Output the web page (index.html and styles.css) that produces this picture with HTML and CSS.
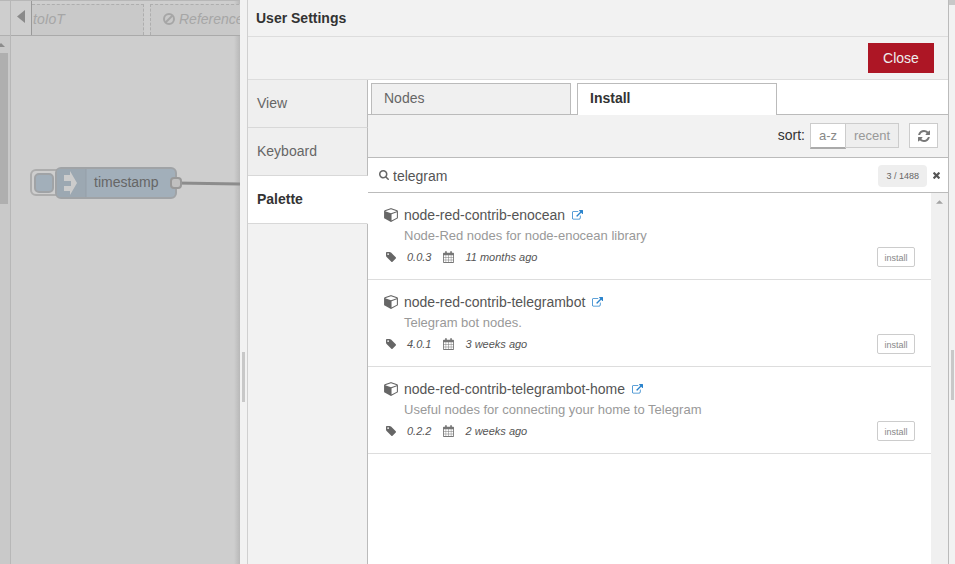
FILE: index.html
```html
<!DOCTYPE html>
<html lang="en">
<head>
<meta charset="utf-8">
<title>User Settings</title>
<link rel="stylesheet" href="styles.css">
</head>
<body>
<svg class="sprite" aria-hidden="true">
  <symbol id="refresh" viewBox="0 0 1536 1536"><path d="M1511 928q0 5-1 7-64 268-268 434.500t-478 166.500q-146 0-282.500-55t-243.500-157l-129 129q-19 19-45 19t-45-19-19-45v-448q0-26 19-45t45-19h448q26 0 45 19t19 45-19 45l-137 137q71 66 161 102t187 36q134 0 250-65t186-179q11-17 53-117 8-23 30-23h192q13 0 22.500 9.500t9.500 22.500zm25-800v448q0 26-19 45t-45 19h-448q-26 0-45-19t-19-45 19-45l138-138q-148-137-349-137-134 0-250 65t-186 179q-11 17-53 117-8 23-30 23h-199q-13 0-22.500-9.500t-9.500-22.500v-7q65-268 270-434.500t480-166.500q146 0 284 55.500t245 156.500l130-129q19-19 45-19t45 19 19 45z"/></symbol>
  <symbol id="search" viewBox="0 0 1664 1664"><path d="M1152 704q0-185-131.500-316.500t-316.500-131.500-316.500 131.500-131.500 316.500 131.500 316.500 316.500 131.500 316.500-131.500 131.500-316.500zm512 832q0 52-38 90t-90 38q-54 0-90-38l-343-342q-179 124-399 124-143 0-273.500-55.500t-225-150-150-225-55.500-273.500 55.500-273.500 150-225 225-150 273.500-55.500 273.500 55.500 225 150 150 225 55.500 273.500q0 220-124 399l343 343q37 37 37 90z"/></symbol>
  <symbol id="external" viewBox="0 0 1792 1600"><path d="M1408 928v320q0 119-84.500 203.500t-203.500 84.500h-832q-119 0-203.500-84.500t-84.500-203.500v-832q0-119 84.500-203.500t203.500-84.500h704q14 0 23 9t9 23v64q0 14-9 23t-23 9h-704q-66 0-113 47t-47 113v832q0 66 47 113t113 47h832q66 0 113-47t47-113v-320q0-14 9-23t23-9h64q14 0 23 9t9 23zm384-864v512q0 26-19 45t-45 19-45-19l-176-176-652 652q-10 10-23 10t-23-10l-114-114q-10-10-10-23t10-23l652-652-176-176q-19-19-19-45t19-45 45-19h512q26 0 45 19t19 45z"/></symbol>
  <symbol id="tag" viewBox="0 128 1515 1515"><path d="M448 448q0-53-37.500-90.500t-90.500-37.500-90.500 37.500-37.500 90.500 37.500 90.500 90.500 37.500 90.500-37.500 37.500-90.500zm1067 576q0 53-37 90l-491 492q-39 37-91 37-53 0-90-37l-715-716q-38-37-64.500-101t-26.500-117v-416q0-52 38-90t90-38h416q53 0 117 26.500t102 64.500l715 714q37 39 37 91z"/></symbol>
  <symbol id="cube" viewBox="0 120 1664 1680"><path d="M896 1629l640-349v-636l-640 233v752zm-64-865l698-254-698-254-698 254zm832-252v768q0 35-18 65t-49 47l-704 384q-28 16-61 16t-61-16l-704-384q-31-17-49-47t-18-65v-768q0-40 23-73t61-47l704-256q22-8 44-8t44 8l704 256q38 14 61 47t23 73z"/></symbol>
  <symbol id="times" viewBox="110 366 1188 1188"><path d="M1298 1322q0 40-28 68l-136 136q-28 28-68 28t-68-28l-294-294-294 294q-28 28-68 28t-68-28l-136-136q-28-28-28-68t28-68l294-294-294-294q-28-28-28-68t28-68l136-136q28-28 68-28t68 28l294 294 294-294q28-28 68-28t68 28l136 136q28 28 28 68t-28 68l-294 294 294 294q28 28 28 68z"/></symbol>
  <symbol id="calendar" viewBox="0 0 13 14"><path fill-rule="evenodd" d="M1 2h1.500V1Q2.500 0 3.500 0T4.500 1V2h4V1q0-1 1-1t1 1V2H12q1 0 1 1v10q0 1-1 1H1q-1 0-1-1V3Q0 2 1 2zM1 5v2.200h2.200V5zM3.700 5v2.200h2.500V5zM6.800 5v2.200h2.500V5zM9.800 5v2.200H12V5zM1 7.800v2.400h2.200V7.800zM3.700 7.800v2.400h2.500V7.800zM6.800 7.800v2.400h2.500V7.800zM9.800 7.800v2.400H12V7.800zM1 10.800V13h2.200v-2.200zM3.700 10.800V13h2.500v-2.200zM6.800 10.800V13h2.500v-2.200zM9.800 10.800V13H12v-2.200z"/></symbol>
  <symbol id="ban" viewBox="0 0 12 12"><circle cx="6" cy="6" r="5" fill="none" stroke="currentColor" stroke-width="2"/><path d="M2.500 9.500l7-7" stroke="currentColor" stroke-width="2"/></symbol>
  <symbol id="up" viewBox="0 0 8 4"><path d="M0 4L4 0l4 4z"/></symbol>
</svg>

<div class="app">
  <div class="editor">
    <aside class="strip">
      <div class="strip-head"></div>
      <div class="strip-scroll">
        <svg class="icon strip-arrow"><use href="#up"/></svg>
        <div class="strip-thumb"></div>
      </div>
    </aside>
    <div class="workspace">
      <div class="flow-tabs">
        <button class="scroll-left" aria-label="Scroll left"><svg class="icon" viewBox="0 0 8 13"><path d="M8 0v13L0 6.500z"/></svg></button>
        <div class="flow-tab flow-first">toIoT</div>
        <div class="flow-tab flow-second"><svg class="icon ban"><use href="#ban"/></svg>Reference</div>
      </div>
      <svg class="canvas">
        <path class="wire" d="M165 147L229 148"/>
        <rect class="inject" x="20" y="134" width="34" height="25" rx="5"/>
        <rect class="node" x="24" y="138" width="18" height="18" rx="4"/>
        <rect class="node" x="45" y="132" width="120" height="30" rx="5"/>
        <path class="node-shade" d="M75 133v28H50q-4 0-4-4V137q0-4 4-4z"/>
        <path class="node-line" d="M75 133v28"/>
        <path class="node-arrow" d="M53 139h6v-4l7 12-7 12v-4h-6v-5h7v-5h-7z"/>
        <rect class="port" x="160" y="142" width="10" height="10" rx="3"/>
        <text class="node-label" x="83" y="151">timestamp</text>
      </svg>
    </div>
  </div>

  <div class="separator"><div class="grip"></div></div>

  <section class="tray">
    <h1 class="tray-title">User Settings</h1>
    <div class="tray-toolbar"><button class="close">Close</button></div>
    <div class="tray-body">
      <nav class="side-tabs">
        <a class="side-tab" href="#view">View</a>
        <a class="side-tab" href="#keyboard">Keyboard</a>
        <a class="side-tab active" href="#palette">Palette</a>
        <div class="side-rest"></div>
      </nav>
      <div class="palette">
        <div class="tabs">
          <a class="tab" href="#nodes">Nodes</a>
          <a class="tab active" href="#install">Install</a>
        </div>
        <div class="sort-bar">
          <span class="sort-label">sort:</span>
          <div class="sort-group">
            <button class="sort selected">a-z</button><button class="sort">recent</button>
          </div>
          <button class="refresh" aria-label="Refresh"><svg class="icon"><use href="#refresh"/></svg></button>
        </div>
        <div class="search">
          <svg class="icon search-icon"><use href="#search"/></svg>
          <input class="search-input" type="text" value="telegram" aria-label="Search modules">
          <span class="count">3 / 1488</span>
          <button class="clear" aria-label="Clear"><svg class="icon"><use href="#times"/></svg></button>
        </div>
        <div class="results">
          <ul class="modules">
            <li class="module">
              <div class="module-name"><svg class="icon cube"><use href="#cube"/></svg><span>node-red-contrib-enocean</span><a class="link" href="#enocean" aria-label="Open module page"><svg class="icon"><use href="#external"/></svg></a></div>
              <div class="module-desc">Node-Red nodes for node-enocean library</div>
              <div class="module-meta"><svg class="icon tag"><use href="#tag"/></svg><span class="version">0.0.3</span><svg class="icon calendar"><use href="#calendar"/></svg><span>11 months ago</span><button class="install">install</button></div>
            </li>
            <li class="module">
              <div class="module-name"><svg class="icon cube"><use href="#cube"/></svg><span>node-red-contrib-telegrambot</span><a class="link" href="#telegrambot" aria-label="Open module page"><svg class="icon"><use href="#external"/></svg></a></div>
              <div class="module-desc">Telegram bot nodes.</div>
              <div class="module-meta"><svg class="icon tag"><use href="#tag"/></svg><span class="version">4.0.1</span><svg class="icon calendar"><use href="#calendar"/></svg><span>3 weeks ago</span><button class="install">install</button></div>
            </li>
            <li class="module">
              <div class="module-name"><svg class="icon cube"><use href="#cube"/></svg><span>node-red-contrib-telegrambot-home</span><a class="link" href="#telegrambot-home" aria-label="Open module page"><svg class="icon"><use href="#external"/></svg></a></div>
              <div class="module-desc">Useful nodes for connecting your home to Telegram</div>
              <div class="module-meta"><svg class="icon tag"><use href="#tag"/></svg><span class="version">0.2.2</span><svg class="icon calendar"><use href="#calendar"/></svg><span>2 weeks ago</span><button class="install">install</button></div>
            </li>
          </ul>
          <div class="scrollbar"><svg class="icon scroll-up"><use href="#up"/></svg></div>
        </div>
      </div>
    </div>
  </section>

  <div class="edge"><div class="edge-top"></div><div class="grip edge-grip"></div></div>
</div>
</body>
</html>
```
FILE: styles.css
```css
* { box-sizing: border-box; }

body {
  margin: 0;
  font: 14px/20px "Liberation Sans", Arial, sans-serif;
  color: #555;
  background: #f2f2f2;
}

button, input { font: inherit; margin: 0; padding: 0; }
a { color: inherit; text-decoration: none; }
.sprite { position: absolute; width: 0; height: 0; }
.icon { display: block; flex: none; fill: currentColor; }

.app { display: flex; height: 100vh; overflow: hidden; }

/* Dimmed editor */
.editor {
  display: flex;
  flex: 0 0 240px;
  overflow: hidden;
  background: linear-gradient(to left, #b8b8b8, #cecece 6px);
}
.strip { display: flex; flex-direction: column; width: 11px; border-right: 1px solid #b7b7b7; }
.strip-head { height: 36px; border-top: 1px solid #b7b7b7; border-bottom: 1px solid #b0b0b0; }
.strip-scroll { flex: 1; padding-top: 7px; background: #c9c9c9; }
.strip-arrow { width: 8px; height: 4px; margin-left: -3px; color: #8c8c8c; }
.strip-thumb { width: 8px; height: 151px; margin-top: 6px; background: #afafaf; }

.workspace { display: flex; flex: 1; flex-direction: column; min-width: 0; }
.flow-tabs {
  display: flex;
  height: 36px;
  border-top: 1px solid #b7b7b7;
  border-bottom: 1px solid #aaa;
  overflow: hidden;
}
.scroll-left {
  display: flex;
  flex: none;
  justify-content: center;
  width: 21px;
  padding-top: 9px;
  border: 0;
  border-right: 1px solid #999;
  background: #cecece;
  color: #8a8a8a;
}
.scroll-left .icon { width: 8px; height: 13px; }
.flow-tab {
  display: flex;
  flex: none;
  align-items: center;
  height: 31px;
  margin-top: 3px;
  padding-bottom: 2px;
  border: 1px dashed #aeaeae;
  border-bottom: 0;
  background: #c9c9c9;
  color: #a6a6a6;
  font-style: italic;
}
.flow-first { width: 112px; padding-left: 1px; border-left: 0; }
.flow-second { width: 150px; margin-left: 6px; padding-left: 12px; gap: 4px; }
.ban { width: 12px; height: 12px; }

.canvas { flex: 1; width: 100%; min-height: 0; }
.wire { stroke: #8c8c8c; stroke-width: 3; }
.inject { fill: #cecece; stroke: #adadad; stroke-width: 2; }
.node { fill: #a2afba; stroke: #a0a3a6; stroke-width: 2; }
.node-shade { fill: #9ca8b2; }
.node-line { stroke: #959fa8; }
.node-arrow { fill: #ccc; }
.port { fill: #c0c0c0; stroke: #999; stroke-width: 2; }
.node-label { fill: #666; font-size: 14px; }

/* Tray edges */
.separator { display: flex; align-items: center; flex: 0 0 7px; }
.grip { width: 3px; height: 50px; margin: 190px 0 0 2px; background: #c8c8c8; }
.edge { display: flex; flex: 0 0 6px; flex-direction: column; align-items: center; }
.edge-top { width: 6px; height: 5px; background: #c8c8c8; }
.edge-grip { margin: 345px 0 0; }

/* Tray */
.tray {
  display: flex;
  flex: 1;
  flex-direction: column;
  min-width: 0;
  border-right: 1px solid #bbb;
  border-left: 1px solid #d0d0d0;
}
.tray-title {
  margin: 0;
  padding: 8px;
  border-bottom: 1px solid #ddd;
  font-size: 14px;
  line-height: 20px;
  color: #333;
}
.tray-toolbar {
  display: flex;
  justify-content: flex-end;
  padding: 6px 14px;
  border-bottom: 1px solid #ddd;
}
.close { width: 66px; height: 30px; border: 0; background: #ad1625; color: #eee; }
.tray-body { display: flex; flex: 1; min-height: 0; }

.side-tabs { display: flex; flex: 0 0 120px; flex-direction: column; }
.side-tab {
  height: 48px;
  padding: 13px 9px;
  border-right: 1px solid #bbb;
  border-bottom: 1px solid #d8d8d8;
  background: #efefef;
  color: #666;
}
.side-tab.active { border-right-color: #fff; background: #fff; color: #333; font-weight: bold; }
.side-rest { flex: 1; border-right: 1px solid #bbb; }

.palette { display: flex; flex: 1; flex-direction: column; min-width: 0; background: #fff; }
.tabs {
  display: flex;
  gap: 6px;
  height: 35px;
  padding: 3px 3px 0;
  border-bottom: 1px solid #bbb;
}
.tab {
  flex: 0 1 200px;
  height: 31px;
  padding: 4px 12px;
  border: 1px solid #bbb;
  border-bottom: 0;
  background: #f0f0f0;
  color: #666;
}
.tab.active { height: 32px; background: #fff; color: #333; font-weight: bold; }

.sort-bar {
  display: flex;
  justify-content: flex-end;
  height: 43px;
  padding: 8px 10px;
  border-bottom: 1px solid #bbb;
  background: #f2f2f2;
}
.sort-label { padding-top: 2px; color: #333; }
.sort-group { display: flex; margin: 0 10px 0 5px; }
.sort {
  width: 54px;
  height: 25px;
  margin-left: -1px;
  border: 1px solid #ccc;
  background: #eee;
  color: #999;
  font-size: 13px;
}
.sort.selected { width: 36px; height: 26px; margin: 0; border-bottom: 2px solid #aaa; background: #fff; color: #888; }
.refresh {
  display: flex;
  align-items: center;
  justify-content: center;
  width: 29px;
  height: 25px;
  border: 1px solid #ccc;
  background: #fff;
  color: #777;
}
.refresh .icon { width: 12px; height: 12px; }

.search {
  display: flex;
  align-items: center;
  height: 35px;
  padding: 0 8px 0 11px;
  border-bottom: 1px solid #bbb;
}
.search-icon { width: 10px; height: 10px; color: #666; }
.search-input { flex: 1; min-width: 0; margin: 2px 0 0 4px; border: 0; outline: 0; background: none; color: #555; }
.count { margin-top: 1px; padding: 0 8px; border-radius: 4px; background: #eee; color: #666; font-size: 9px; line-height: 22px; }
.clear { margin-left: 6px; border: 0; background: none; color: #555; }
.clear .icon { width: 7px; height: 7px; }

.results { display: flex; flex: 1; min-height: 0; }
.modules { flex: 1; min-width: 0; margin: 0; padding: 0; list-style: none; }
.module { height: 87px; padding: 12px 16px; border-bottom: 1px solid #ddd; }
.module-name { display: flex; align-items: center; color: #555; }
.cube { width: 14px; height: 14px; margin-right: 6px; color: #666; }
.link { margin-left: 7px; color: #2a83cc; }
.link .icon { width: 11px; height: 10px; }
.module-desc { padding-left: 20px; color: #999; font-size: 13px; line-height: 22px; }
.module-meta { display: flex; align-items: center; height: 20px; color: #555; font-size: 11px; font-style: italic; }
.tag { width: 10px; height: 10px; margin-left: 2px; color: #666; }
.version { margin: 0 12px 0 11px; }
.calendar { width: 11px; height: 12px; margin-right: 11px; color: #777; }
.install {
  width: 38px;
  height: 20px;
  margin-left: auto;
  border: 1px solid #ccc;
  border-radius: 2px;
  background: #fff;
  color: #888;
  font-size: 9px;
  font-style: normal;
}
.scrollbar { flex: 0 0 17px; padding: 7px 0 0 5px; background: #f0f0f0; color: #a3a3a3; }
.scroll-up { width: 7px; height: 4px; }
```
